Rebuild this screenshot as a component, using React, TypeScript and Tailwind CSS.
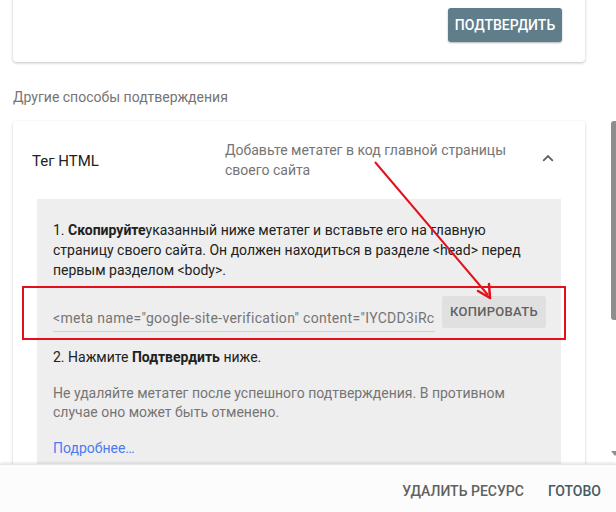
import React from 'react';

function ChevronUp() {
  return (
    <svg width="12" height="8" viewBox="0 0 12 8" className="text-[#616161]">
      <path d="M1.2 6.8 L6 2 L10.8 6.8" fill="none" stroke="currentColor" strokeWidth="1.8" />
    </svg>
  );
}

export default function App() {
  return (
    <div className="relative w-[616px] h-[512px] overflow-hidden bg-white text-[14px] text-[#212121]" style={{ fontFamily: 'Roboto, "Noto Sans", sans-serif' }}>
      <div className="flex flex-col h-full">
        <div className="flex flex-1 overflow-hidden">
          <div className="flex-1 flex flex-col overflow-hidden">
            {/* verify card, scrolled up */}
            <div className="ml-[13px] w-[572px] mt-[-30px] h-[92px] bg-white rounded-sm shadow-[0_1px_3px_rgba(0,0,0,0.25)] flex justify-end items-start pt-[38px] pr-[23px] shrink-0">
              <button className="h-[34px] w-[114px] bg-[#607d8b] text-white text-[14px] font-medium rounded-[3px] shadow-[0_1px_2px_rgba(0,0,0,0.3)] uppercase">
                Подтвердить
              </button>
            </div>

            <div className="ml-[13px] mt-[27px] text-[14px] text-[#757575] leading-[16px] shrink-0">Другие способы подтверждения</div>

            <div className="ml-[13px] mt-[16px] w-[572px] bg-white rounded-sm shadow-[0_1px_3px_rgba(0,0,0,0.22)] shrink-0">
              <div className="flex items-start pl-[19px] pr-[30px] pt-[19px] pb-[19px]">
                <div className="w-[193px] text-[15px] leading-[20px] pt-[11px] text-[#212121]">Тег HTML</div>
                <div className="w-[300px] text-[14px] leading-[20px] text-[#757575]">
                  Добавьте метатег в код главной страницы своего сайта
                </div>
                <div className="flex-1 flex justify-end pt-[14px] pr-[1px]">
                  <ChevronUp />
                </div>
              </div>

              <div className="mx-[24px] bg-[#eeeeee] pl-[16px] pr-[15px] pt-[21px] pb-[40px]">
                <p className="leading-[20px] text-[#212121]">
                  1. <b className="font-bold">Скопируйте</b>указанный ниже метатег и вставьте его на главную страницу своего сайта. Он должен находиться в разделе &lt;head&gt; перед первым разделом &lt;body&gt;.
                </p>

                <div className="mt-[6px] ml-[-31px] mr-[-20px] border-2 border-[#e3101b] h-[54px] flex items-start pl-[29px] pr-[18px] pt-[8px]">
                  <div className="w-[382px] mt-[12px] border-b border-[#cfcfcf] pb-[3px] overflow-hidden whitespace-nowrap text-[#757575] leading-[20px] tracking-[0.3px]">
                    &lt;meta name="google-site-verification" content="IYCDD3iRc
                  </div>
                  <div className="flex-1" />
                  <button className="h-[32px] w-[104px] bg-[#e0e0e0] rounded-[3px] text-[13px] font-medium text-[#616161] tracking-[0.3px]">
                    КОПИРОВАТЬ
                  </button>
                </div>

                <p className="mt-[7px] leading-[20px] text-[#212121]">
                  2. Нажмите <b className="font-bold">Подтвердить</b> ниже.
                </p>

                <p className="mt-[17px] leading-[19px] text-[#757575]">
                  Не удаляйте метатег после успешного подтверждения. В противном случае оно может быть отменено.
                </p>

                <p className="mt-[16px] leading-[20px] text-[#4a7cf0]">Подробнее…</p>
              </div>
            </div>
          </div>

          {/* scrollbar */}
          <div className="w-[6px] relative shrink-0">
            <div className="mt-[121px] h-[199px] w-[5px] ml-[1px] bg-[#8e8e8e] rounded-l-[3px]" />
            <div className="absolute left-[1px] top-[451px] w-0 h-0 border-l-[4px] border-r-[4px] border-t-[5px] border-l-transparent border-r-transparent border-t-[#8e8e8e]" />
          </div>
        </div>

        <div className="h-[48px] shrink-0 bg-[#fcfcfc] shadow-[0_-1px_3px_rgba(0,0,0,0.12)] border-t border-[#e6e6e6] flex items-center justify-end pr-[15px] pt-[6px] gap-[24px] text-[14px] font-medium uppercase z-10">
          <span className="text-[#616161]">Удалить ресурс</span>
          <span className="text-[#455a64]">Готово</span>
        </div>
      </div>

      {/* annotation arrow */}
      <svg className="absolute left-0 top-0 pointer-events-none" width="616" height="512">
        <line x1="375" y1="162" x2="488" y2="295" stroke="#e3101b" strokeWidth="2" />
        <path d="M490 298 L478 291 M490 298 L489 284" stroke="#e3101b" strokeWidth="2.5" fill="none" strokeLinecap="round" />
      </svg>
    </div>
  );
}
